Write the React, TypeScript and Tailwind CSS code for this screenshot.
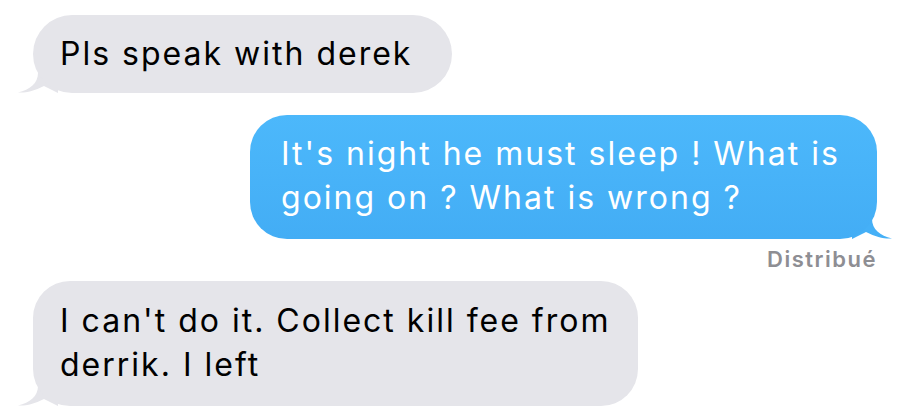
import React from "react";

const font = { fontFamily: '"Inter", "Liberation Sans", sans-serif' };

const TailLeft = () => (
  <svg
    className="absolute bottom-0 left-[-15px]"
    width="40"
    height="30"
    viewBox="0 0 40 30"
  >
    <path
      d="M20 0 L20 10 C20 20 12 27 0 29.5 C8 30 16 28 26 23 L40 30 L40 0 Z"
      fill="#e5e5ea"
    />
  </svg>
);

const TailRight = () => (
  <svg
    className="absolute bottom-0 right-[-15px]"
    width="40"
    height="30"
    viewBox="0 0 40 30"
  >
    <path
      d="M20 0 L20 10 C20 20 28 27 40 29.5 C32 30 24 28 14 23 L0 30 L0 0 Z"
      fill="#45b0f7"
    />
  </svg>
);

export default function App() {
  return (
    <div className="w-[918px] h-[420px] bg-white overflow-hidden" style={font}>
      <div className="flex flex-col pt-[15px] pl-[33px] pr-[41px]">
        <div className="self-start relative">
          <div className="relative z-10 bg-[#e5e5ea] rounded-[39px] h-[78px] w-[419px] pl-[27px] flex items-center text-[32px] tracking-[2px] text-black">
            Pls speak with derek
          </div>
          <TailLeft />
        </div>

        <div className="self-end relative mt-[22px]">
          <div className="relative z-10 w-[627px] h-[124px] rounded-[37px] bg-gradient-to-b from-[#4cb8fb] to-[#43adf5] pl-[31px] pt-[17px] text-[32px] tracking-[2px] leading-[44px] text-white whitespace-nowrap">
            It's night he must sleep ! What is
            <br />
            going on ? What is wrong ?
          </div>
          <TailRight />
        </div>
        <div className="self-end mt-[8px] text-[22px] tracking-[1.5px] leading-[24px] font-semibold text-[#8e8e93]">
          Distribué
        </div>

        <div className="self-start relative mt-[10px]">
          <div className="relative z-10 w-[605px] h-[125px] rounded-[37px] bg-[#e5e5ea] pl-[27px] pt-[18px] text-[32px] tracking-[2px] leading-[44px] text-black whitespace-nowrap">
            I can't do it. Collect kill fee from
            <br />
            derrik. I left
          </div>
          <TailLeft />
        </div>
      </div>
    </div>
  );
}
